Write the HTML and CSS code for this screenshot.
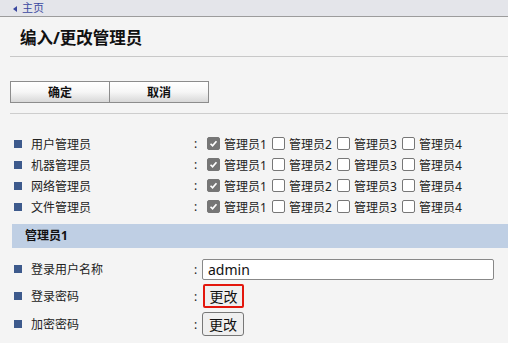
FILE: index.html
```html
<!DOCTYPE html>
<html lang="zh-CN">
<head>
    <meta charset="UTF-8">
    <meta name="viewport" content="width=device-width, initial-scale=1.0">
    <title>编入/更改管理员</title>
    <link rel="stylesheet" href="styles.css">
</head>
<body>
    <div class="topbar">
        <a class="home" href="#"><span class="arrow"></span>主页</a>
    </div>
    <div class="content">
        <h1 class="title">编入/更改管理员</h1>

        <div class="actions">
            <button class="big-btn">确定</button>
            <button class="big-btn">取消</button>
        </div>

        <div class="settings">
            <div class="row">
                <span class="bullet"></span>
                <span class="name">用户管理员</span>
                <span class="colon">:</span>
                <div class="value">
                    <span class="cb checked"><svg viewBox="0 0 13 13"><path d="M3 6.8 L5.4 9.2 L10 3.8" /></svg></span><span class="cb-label">管理员1</span>
                    <span class="cb"></span><span class="cb-label">管理员2</span>
                    <span class="cb"></span><span class="cb-label">管理员3</span>
                    <span class="cb"></span><span class="cb-label">管理员4</span>
                </div>
            </div>
            <div class="row">
                <span class="bullet"></span>
                <span class="name">机器管理员</span>
                <span class="colon">:</span>
                <div class="value">
                    <span class="cb checked"><svg viewBox="0 0 13 13"><path d="M3 6.8 L5.4 9.2 L10 3.8" /></svg></span><span class="cb-label">管理员1</span>
                    <span class="cb"></span><span class="cb-label">管理员2</span>
                    <span class="cb"></span><span class="cb-label">管理员3</span>
                    <span class="cb"></span><span class="cb-label">管理员4</span>
                </div>
            </div>
            <div class="row">
                <span class="bullet"></span>
                <span class="name">网络管理员</span>
                <span class="colon">:</span>
                <div class="value">
                    <span class="cb checked"><svg viewBox="0 0 13 13"><path d="M3 6.8 L5.4 9.2 L10 3.8" /></svg></span><span class="cb-label">管理员1</span>
                    <span class="cb"></span><span class="cb-label">管理员2</span>
                    <span class="cb"></span><span class="cb-label">管理员3</span>
                    <span class="cb"></span><span class="cb-label">管理员4</span>
                </div>
            </div>
            <div class="row">
                <span class="bullet"></span>
                <span class="name">文件管理员</span>
                <span class="colon">:</span>
                <div class="value">
                    <span class="cb checked"><svg viewBox="0 0 13 13"><path d="M3 6.8 L5.4 9.2 L10 3.8" /></svg></span><span class="cb-label">管理员1</span>
                    <span class="cb"></span><span class="cb-label">管理员2</span>
                    <span class="cb"></span><span class="cb-label">管理员3</span>
                    <span class="cb"></span><span class="cb-label">管理员4</span>
                </div>
            </div>
        </div>

        <div class="section">管理员1</div>

        <div class="account">
            <div class="row row-input">
                <span class="bullet"></span>
                <span class="name">登录用户名称</span>
                <span class="colon">:</span>
                <div class="value">
                    <input class="text-input" type="text" value="admin">
                </div>
            </div>
            <div class="row row-btn">
                <span class="bullet"></span>
                <span class="name">登录密码</span>
                <span class="colon">:</span>
                <div class="value">
                    <button class="small-btn focused">更改</button>
                </div>
            </div>
            <div class="row row-btn">
                <span class="bullet"></span>
                <span class="name">加密密码</span>
                <span class="colon">:</span>
                <div class="value">
                    <button class="small-btn">更改</button>
                </div>
            </div>
        </div>
    </div>
</body>
</html>
```

FILE: styles.css
```css
body {
    margin: 0;
    background-color: #f4f4f4;
    font-family: "Noto Sans", "Noto Sans CJK SC", sans-serif;
    font-size: 12px;
    color: #222;
}
.topbar {
    height: 16px;
    background-color: #e4e5ea;
    border-bottom: 1px solid #9c9c9c;
    padding-left: 13px;
    line-height: 15px;
}
.home {
    color: #3b48a0;
    text-decoration: none;
    font-size: 11px;
}
.arrow {
    display: inline-block;
    width: 0;
    height: 0;
    border-top: 3px solid transparent;
    border-bottom: 3px solid transparent;
    border-right: 4px solid #3b48a0;
    margin-right: 5px;
    vertical-align: 0;
}
.content {
    padding-left: 10px;
}
.title {
    margin: 0;
    padding: 10px 10px 0;
    height: 29px;
    font-size: 16.5px;
    line-height: 21px;
    color: #111;
    border-bottom: 1px solid #c8c8c8;
}
.actions {
    display: flex;
    margin-top: 24px;
    padding-bottom: 10px;
    border-bottom: 1px solid #cdcdcd;
}
.big-btn {
    width: 100px;
    height: 22px;
    margin: 0;
    padding: 0;
    border: 1px solid #8c8c8c;
    background: linear-gradient(#ffffff 0%, #f6f6f6 50%, #d8d8d8 100%);
    font-family: "Noto Sans", "Noto Sans CJK SC", sans-serif;
    font-size: 12px;
    font-weight: bold;
    color: #111;
}
.big-btn + .big-btn {
    width: 99px;
    border-left: none;
}
.settings {
    padding-top: 19px;
}
.row {
    display: flex;
    align-items: center;
    height: 21px;
}
.bullet {
    width: 8px;
    height: 8px;
    margin: 0 9px 0 4px;
    background-color: #3d5a8c;
    flex-shrink: 0;
}
.name {
    width: 163px;
    font-size: 12px;
    color: #222;
}
.colon {
    width: 8px;
    font-size: 12px;
}
.value {
    display: flex;
    align-items: center;
}
.cb {
    width: 13px;
    height: 13px;
    margin-left: 5px;
    margin-right: 4px;
    box-sizing: border-box;
    border: 1px solid #777;
    border-radius: 2px;
    background-color: #fff;
}
.cb.checked {
    background-color: #767676;
    border-color: #767676;
}
.cb svg {
    display: block;
    width: 11px;
    height: 11px;
}
.cb svg path {
    fill: none;
    stroke: #fff;
    stroke-width: 2;
}
.cb-label {
    width: 43px;
    font-size: 12px;
    white-space: nowrap;
}
.section {
    margin-top: 7px;
    margin-left: 2px;
    height: 24px;
    line-height: 24px;
    padding-left: 13px;
    background-color: #bfcfe4;
    font-weight: bold;
    font-size: 12px;
    color: #111;
}
.row-input {
    margin-top: 10px;
    height: 22px;
}
.row-btn {
    height: 24px;
    margin-top: 4px;
}
.text-input {
    width: 292px;
    height: 21px;
    box-sizing: border-box;
    border: 1px solid #888;
    border-radius: 2px;
    padding: 0 5px;
    font-family: "Noto Sans", sans-serif;
    font-size: 14px;
    color: #111;
    background-color: #fff;
}
.small-btn {
    width: 42px;
    height: 24px;
    margin: 0;
    padding: 0;
    box-sizing: border-box;
    border: 1px solid #777;
    border-radius: 3px;
    background-color: #efefef;
    font-family: "Noto Sans", "Noto Sans CJK SC", sans-serif;
    font-size: 14px;
    color: #111;
}
.small-btn.focused {
    border: 2px solid #e3170d;
    border-radius: 2px;
    margin-left: 1px;
    width: 41px;
}
```
